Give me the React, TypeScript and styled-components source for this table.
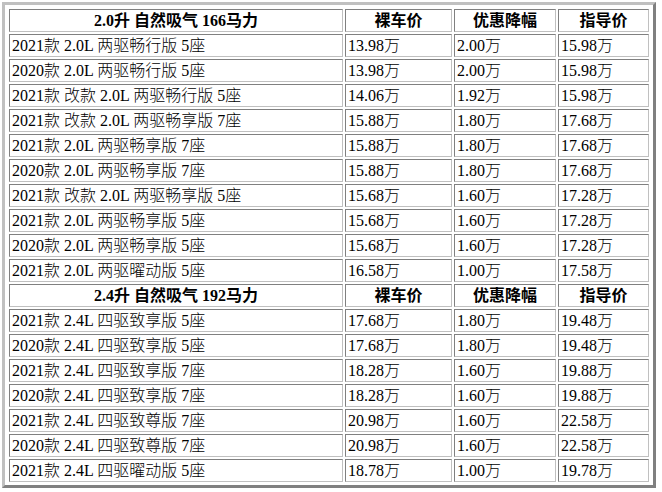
import React from "react";
import styled, { createGlobalStyle } from "styled-components";

const GlobalStyle = createGlobalStyle`
  body {
    margin: 2px;
    background: #ffffff;
    font-family: "Liberation Serif", "Noto Sans CJK SC", serif;
  }
`;

const PriceTable = styled.table`
  width: 654px;
  table-layout: fixed;
  border-collapse: separate;
  border-spacing: 2px;
  padding: 2px 2px 1px 2px;
  border-style: solid;
  border-width: 3px;
  border-color: #c0c0c0 #808080 #808080 #c0c0c0;
  font-size: 16px;
  color: #000;
`;

const HeadCell = styled.th<{ $w?: number }>`
  box-sizing: border-box;
  width: ${(p) => (p.$w ? `${p.$w}px` : "auto")};
  height: 23px;
  padding: 1px;
  line-height: 19px;
  font-weight: bold;
  text-align: center;
  white-space: nowrap;
  border-style: solid;
  border-width: 1px;
  border-color: #808080 #c0c0c0 #c0c0c0 #808080;
`;

const Cell = styled.td`
  box-sizing: border-box;
  height: 23px;
  padding: 1px 1px 1px 2px;
  line-height: 19px;
  font-weight: 300;
  text-align: left;
  white-space: nowrap;
  border-style: solid;
  border-width: 1px;
  border-color: #808080 #c0c0c0 #c0c0c0 #808080;
`;

type Trim = [string, string, string, string];

const groups: { title: string; rows: Trim[] }[] = [
  {
    title: "2.0升 自然吸气 166马力",
    rows: [
      ["2021款 2.0L 两驱畅行版 5座", "13.98万", "2.00万", "15.98万"],
      ["2020款 2.0L 两驱畅行版 5座", "13.98万", "2.00万", "15.98万"],
      ["2021款 改款 2.0L 两驱畅行版 5座", "14.06万", "1.92万", "15.98万"],
      ["2021款 改款 2.0L 两驱畅享版 7座", "15.88万", "1.80万", "17.68万"],
      ["2021款 2.0L 两驱畅享版 7座", "15.88万", "1.80万", "17.68万"],
      ["2020款 2.0L 两驱畅享版 7座", "15.88万", "1.80万", "17.68万"],
      ["2021款 改款 2.0L 两驱畅享版 5座", "15.68万", "1.60万", "17.28万"],
      ["2021款 2.0L 两驱畅享版 5座", "15.68万", "1.60万", "17.28万"],
      ["2020款 2.0L 两驱畅享版 5座", "15.68万", "1.60万", "17.28万"],
      ["2021款 2.0L 两驱曜动版 5座", "16.58万", "1.00万", "17.58万"],
    ],
  },
  {
    title: "2.4升 自然吸气 192马力",
    rows: [
      ["2021款 2.4L 四驱致享版 5座", "17.68万", "1.80万", "19.48万"],
      ["2020款 2.4L 四驱致享版 5座", "17.68万", "1.80万", "19.48万"],
      ["2021款 2.4L 四驱致享版 7座", "18.28万", "1.60万", "19.88万"],
      ["2020款 2.4L 四驱致享版 7座", "18.28万", "1.60万", "19.88万"],
      ["2021款 2.4L 四驱致尊版 7座", "20.98万", "1.60万", "22.58万"],
      ["2020款 2.4L 四驱致尊版 7座", "20.98万", "1.60万", "22.58万"],
      ["2021款 2.4L 四驱曜动版 5座", "18.78万", "1.00万", "19.78万"],
    ],
  },
];

export default function App() {
  return (
    <>
      <GlobalStyle />
      <PriceTable>
        <tbody>
          {groups.map((g, gi) => (
            <React.Fragment key={g.title}>
              <tr>
                <HeadCell $w={gi === 0 ? 334 : undefined}>{g.title}</HeadCell>
                <HeadCell $w={gi === 0 ? 107 : undefined}>裸车价</HeadCell>
                <HeadCell $w={gi === 0 ? 102 : undefined}>优惠降幅</HeadCell>
                <HeadCell>指导价</HeadCell>
              </tr>
              {g.rows.map((r, ri) => (
                <tr key={ri}>
                  {r.map((c, ci) => (
                    <Cell key={ci}>{c}</Cell>
                  ))}
                </tr>
              ))}
            </React.Fragment>
          ))}
        </tbody>
      </PriceTable>
    </>
  );
}
